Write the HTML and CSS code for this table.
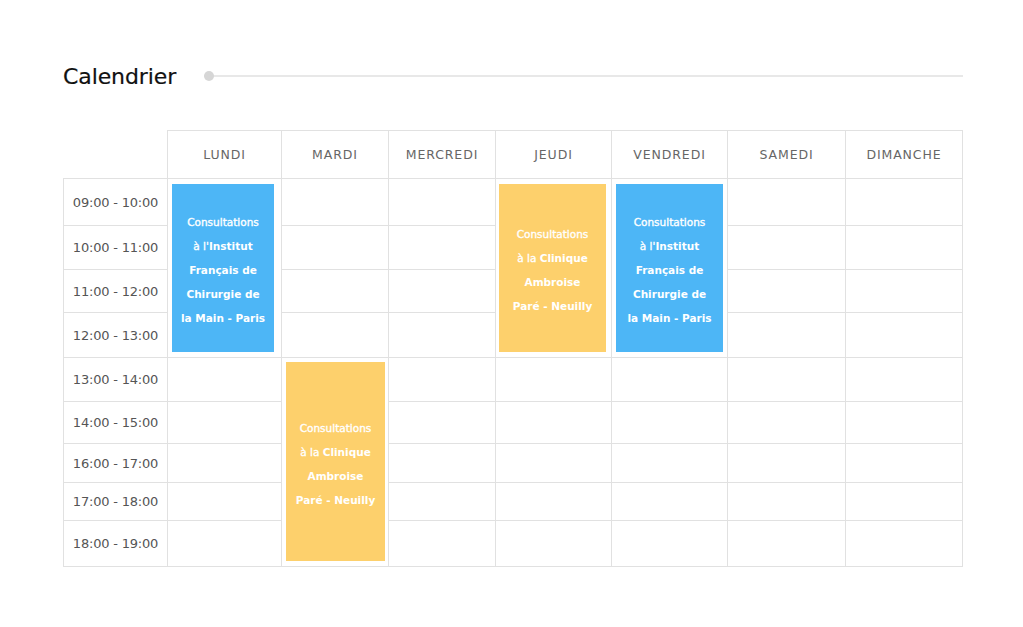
FILE: index.html
```html
<!DOCTYPE html>
<html lang="fr">
<head>
<meta charset="utf-8">
<title>Calendrier</title>
<link rel="stylesheet" href="styles.css">
</head>
<body>
<main class="page">
  <div class="heading">
    <h2 class="title">Calendrier</h2>
    <span class="rule"><span class="dot"></span></span>
  </div>

  <div class="cal">
    <!-- events (explicitly placed) -->
    <div class="cell ev-cell ev-lundi">
      <div class="ev ev-blue"><p class="ev-text">Consultations<br>à l'<b>Institut</b><br><b>Français de</b><br><b>Chirurgie de</b><br><b>la Main - Paris</b></p></div>
    </div>
    <div class="cell ev-cell ev-jeudi">
      <div class="ev ev-yellow"><p class="ev-text">Consultations<br>à la <b>Clinique</b><br><b>Ambroise</b><br><b>Paré - Neuilly</b></p></div>
    </div>
    <div class="cell ev-cell ev-vendredi">
      <div class="ev ev-blue"><p class="ev-text">Consultations<br>à l'<b>Institut</b><br><b>Français de</b><br><b>Chirurgie de</b><br><b>la Main - Paris</b></p></div>
    </div>
    <div class="cell ev-cell ev-mardi">
      <div class="ev ev-yellow"><p class="ev-text">Consultations<br>à la <b>Clinique</b><br><b>Ambroise</b><br><b>Paré - Neuilly</b></p></div>
    </div>

    <!-- header -->
    <div class="cell corner"></div>
    <div class="cell day">Lundi</div>
    <div class="cell day">Mardi</div>
    <div class="cell day">Mercredi</div>
    <div class="cell day">Jeudi</div>
    <div class="cell day">Vendredi</div>
    <div class="cell day">Samedi</div>
    <div class="cell day">Dimanche</div>

    <!-- 09-10 -->
    <div class="cell time">09:00 - 10:00</div>
    <div class="cell"></div><div class="cell"></div><div class="cell"></div><div class="cell"></div>
    <!-- 10-11 -->
    <div class="cell time">10:00 - 11:00</div>
    <div class="cell"></div><div class="cell"></div><div class="cell"></div><div class="cell"></div>
    <!-- 11-12 -->
    <div class="cell time">11:00 - 12:00</div>
    <div class="cell"></div><div class="cell"></div><div class="cell"></div><div class="cell"></div>
    <!-- 12-13 -->
    <div class="cell time">12:00 - 13:00</div>
    <div class="cell"></div><div class="cell"></div><div class="cell"></div><div class="cell"></div>
    <!-- 13-14 -->
    <div class="cell time">13:00 - 14:00</div>
    <div class="cell"></div><div class="cell"></div><div class="cell"></div><div class="cell"></div><div class="cell"></div><div class="cell"></div>
    <!-- 14-15 -->
    <div class="cell time">14:00 - 15:00</div>
    <div class="cell"></div><div class="cell"></div><div class="cell"></div><div class="cell"></div><div class="cell"></div><div class="cell"></div>
    <!-- 16-17 -->
    <div class="cell time">16:00 - 17:00</div>
    <div class="cell"></div><div class="cell"></div><div class="cell"></div><div class="cell"></div><div class="cell"></div><div class="cell"></div>
    <!-- 17-18 -->
    <div class="cell time">17:00 - 18:00</div>
    <div class="cell"></div><div class="cell"></div><div class="cell"></div><div class="cell"></div><div class="cell"></div><div class="cell"></div>
    <!-- 18-19 -->
    <div class="cell time">18:00 - 19:00</div>
    <div class="cell"></div><div class="cell"></div><div class="cell"></div><div class="cell"></div><div class="cell"></div><div class="cell"></div>
  </div>
</main>
</body>
</html>
```

FILE: styles.css
```css
* { box-sizing: border-box; }

html, body {
  margin: 0;
  background: #ffffff;
}

body {
  font-family: "DejaVu Sans", "Liberation Sans", sans-serif;
  color: #555;
}

.page {
  padding: 62px 60px 0 63px;
}

.heading {
  display: flex;
  align-items: center;
  height: 30px;
}

.title {
  margin: 0;
  font-size: 22px;
  font-weight: normal;
  color: #111;
  line-height: 30px;
  letter-spacing: -0.1px;
  -webkit-text-stroke: 0.2px #111;
}

.rule {
  flex: 1;
  position: relative;
  height: 2px;
  margin-left: 28px;
  margin-top: -2px;
  background: #e8e8e8;
}

.dot {
  position: absolute;
  left: 0;
  top: -4px;
  width: 10px;
  height: 10px;
  border-radius: 50%;
  background: #d6d6d6;
}

.cal {
  margin-top: 38px;
  display: grid;
  grid-template-columns: 105px 114px 107px 107px 116px 116px 118px 117px;
  grid-template-rows: 49px 47px 44px 43px 45px 44px 42px 39px 38px 46px;
}

.cell {
  border-right: 1px solid #e1e1e1;
  border-bottom: 1px solid #e1e1e1;
}

.day {
  border-top: 1px solid #e1e1e1;
  display: flex;
  align-items: center;
  justify-content: center;
  font-size: 12.5px;
  letter-spacing: 0.9px;
  text-transform: uppercase;
  color: #666;
  padding-bottom: 1px;
}

.time {
  border-left: 1px solid #e1e1e1;
  display: flex;
  align-items: center;
  justify-content: center;
  font-size: 13px;
  color: #555;
  letter-spacing: -0.2px;
}

.ev-cell {
  padding: 5px 4px 5px 4px;
}

.ev-lundi { grid-column: 2; grid-row: 2 / span 4; padding-right: 7px; }
.ev-jeudi { grid-column: 5; grid-row: 2 / span 4; padding-left: 3px; padding-right: 5px; }
.ev-vendredi { grid-column: 6; grid-row: 2 / span 4; }
.ev-mardi { grid-column: 3; grid-row: 6 / span 5; padding-top: 4px; padding-right: 3px; }

.ev {
  height: 100%;
  display: flex;
  align-items: center;
  justify-content: center;
  color: #fff;
}

.ev-text {
  margin: 0;
  text-align: center;
  font-size: 10.5px;
  line-height: 24px;
  white-space: nowrap;
  padding-top: 4px;
  -webkit-text-stroke: 0.35px #fff;
}

.ev-text b { font-weight: bold; -webkit-text-stroke: 0; }

.ev-blue { background: #4db6f6; }
.ev-yellow { background: #fdd06c; }
```
